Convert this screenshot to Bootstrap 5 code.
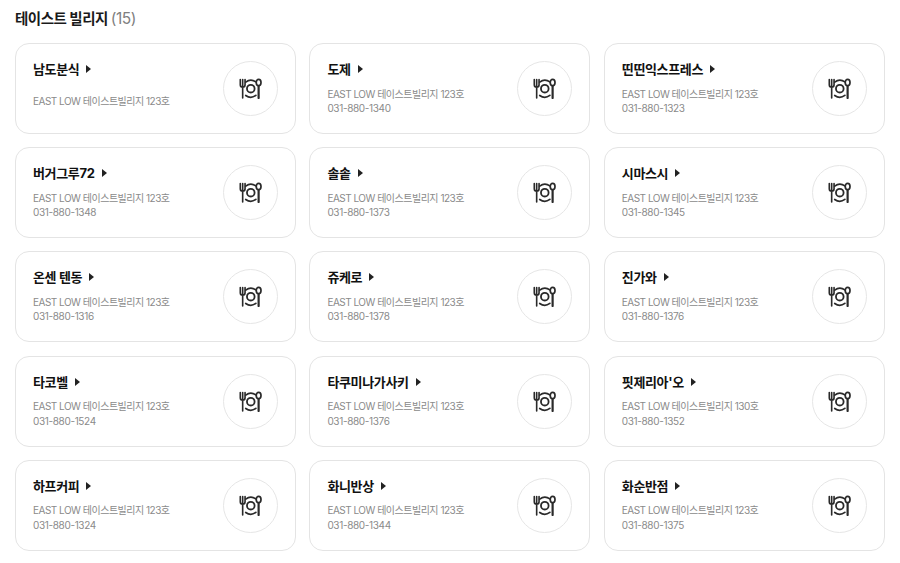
<!DOCTYPE html>
<html lang="ko"><head><meta charset="utf-8">
<link href="https://cdn.jsdelivr.net/npm/bootstrap@5.3.0/dist/css/bootstrap.min.css" rel="stylesheet">
<style>
body{font-family:Inter,"Noto Sans CJK KR",sans-serif;background:#fff;color:#111;overflow:hidden}
.page-wrap{padding:9px 15px 0}
.page-title{font-size:14.5px;font-weight:700;line-height:20px;letter-spacing:-.5px;margin:0 0 14px;color:#1a1a1a}
.page-title span{font-weight:400;color:#808080;font-size:15.5px}
.shop-grid{display:grid;grid-template-columns:repeat(3,281px);column-gap:13.4px;row-gap:13.2px}
.shop-card{height:91px;border:1px solid #e4e4e4;border-radius:14px;padding:16px 17px 0;display:flex;align-items:flex-start;justify-content:space-between;background:#fff}
.shop-name{font-size:13px;font-weight:700;line-height:18px;letter-spacing:-.35px;color:#111;display:flex;align-items:center;gap:7px}
.shop-name::after{content:"";border-left:5px solid #222;border-top:4px solid transparent;border-bottom:4px solid transparent}
.shop-lines{height:30px;margin-top:8px;display:flex;flex-direction:column;justify-content:center}
.shop-addr,.shop-tel{font-size:10px;line-height:14.5px;color:#8a8a8a}
.shop-addr{letter-spacing:-.5px}
.shop-tel{letter-spacing:-.35px}
.shop-icon{width:55px;height:55px;margin-top:1px;border:1px solid #e6e6e6;border-radius:50%;display:flex;align-items:center;justify-content:center;flex:none}
</style></head><body>
<svg width="0" height="0" class="d-block" aria-hidden="true"><symbol id="dish" viewBox="0 0 24 22">
<g fill="none" stroke="#2a2a2a" stroke-linecap="round">
<path stroke-width="1.700" d="M1.300 1.700v5.300c0 1.700 1.100 2.500 2.500 2.500s2.500-.8 2.500-2.500V1.700M3.800 1.700v19.300"/>
<ellipse stroke-width="1.800" cx="20.500" cy="4.800" rx="2.500" ry="3.400"/><path stroke-width="2.300" d="M20.500 8.200v12.800"/>
<path stroke-width="1.800" d="M7 4.300a9 9 0 0 1 10.600-.2M17.600 18.200a9 9 0 0 1-10.600.1"/>
<circle stroke-width="1.900" cx="12.300" cy="11.200" r="4"/>
</g></symbol></svg>
<main class="page-wrap">
<h1 class="page-title">테이스트 빌리지 <span>(15)</span></h1>
<div class="shop-grid">
<div class="shop-card"><div><div class="shop-name">남도분식</div><div class="shop-lines"><div class="shop-addr">EAST LOW 테이스트빌리지 123호</div></div></div><div class="shop-icon"><svg width="23" height="21"><use href="#dish"/></svg></div></div>
<div class="shop-card"><div><div class="shop-name">도제</div><div class="shop-lines"><div class="shop-addr">EAST LOW 테이스트빌리지 123호</div><div class="shop-tel">031-880-1340</div></div></div><div class="shop-icon"><svg width="23" height="21"><use href="#dish"/></svg></div></div>
<div class="shop-card"><div><div class="shop-name">띤띤익스프레스</div><div class="shop-lines"><div class="shop-addr">EAST LOW 테이스트빌리지 123호</div><div class="shop-tel">031-880-1323</div></div></div><div class="shop-icon"><svg width="23" height="21"><use href="#dish"/></svg></div></div>
<div class="shop-card"><div><div class="shop-name">버거그루72</div><div class="shop-lines"><div class="shop-addr">EAST LOW 테이스트빌리지 123호</div><div class="shop-tel">031-880-1348</div></div></div><div class="shop-icon"><svg width="23" height="21"><use href="#dish"/></svg></div></div>
<div class="shop-card"><div><div class="shop-name">솔솥</div><div class="shop-lines"><div class="shop-addr">EAST LOW 테이스트빌리지 123호</div><div class="shop-tel">031-880-1373</div></div></div><div class="shop-icon"><svg width="23" height="21"><use href="#dish"/></svg></div></div>
<div class="shop-card"><div><div class="shop-name">시마스시</div><div class="shop-lines"><div class="shop-addr">EAST LOW 테이스트빌리지 123호</div><div class="shop-tel">031-880-1345</div></div></div><div class="shop-icon"><svg width="23" height="21"><use href="#dish"/></svg></div></div>
<div class="shop-card"><div><div class="shop-name">온센 텐동</div><div class="shop-lines"><div class="shop-addr">EAST LOW 테이스트빌리지 123호</div><div class="shop-tel">031-880-1316</div></div></div><div class="shop-icon"><svg width="23" height="21"><use href="#dish"/></svg></div></div>
<div class="shop-card"><div><div class="shop-name">쥬케로</div><div class="shop-lines"><div class="shop-addr">EAST LOW 테이스트빌리지 123호</div><div class="shop-tel">031-880-1378</div></div></div><div class="shop-icon"><svg width="23" height="21"><use href="#dish"/></svg></div></div>
<div class="shop-card"><div><div class="shop-name">진가와</div><div class="shop-lines"><div class="shop-addr">EAST LOW 테이스트빌리지 123호</div><div class="shop-tel">031-880-1376</div></div></div><div class="shop-icon"><svg width="23" height="21"><use href="#dish"/></svg></div></div>
<div class="shop-card"><div><div class="shop-name">타코벨</div><div class="shop-lines"><div class="shop-addr">EAST LOW 테이스트빌리지 123호</div><div class="shop-tel">031-880-1524</div></div></div><div class="shop-icon"><svg width="23" height="21"><use href="#dish"/></svg></div></div>
<div class="shop-card"><div><div class="shop-name">타쿠미나가사키</div><div class="shop-lines"><div class="shop-addr">EAST LOW 테이스트빌리지 123호</div><div class="shop-tel">031-880-1376</div></div></div><div class="shop-icon"><svg width="23" height="21"><use href="#dish"/></svg></div></div>
<div class="shop-card"><div><div class="shop-name">핏제리아'오</div><div class="shop-lines"><div class="shop-addr">EAST LOW 테이스트빌리지 130호</div><div class="shop-tel">031-880-1352</div></div></div><div class="shop-icon"><svg width="23" height="21"><use href="#dish"/></svg></div></div>
<div class="shop-card"><div><div class="shop-name">하프커피</div><div class="shop-lines"><div class="shop-addr">EAST LOW 테이스트빌리지 123호</div><div class="shop-tel">031-880-1324</div></div></div><div class="shop-icon"><svg width="23" height="21"><use href="#dish"/></svg></div></div>
<div class="shop-card"><div><div class="shop-name">화니반상</div><div class="shop-lines"><div class="shop-addr">EAST LOW 테이스트빌리지 123호</div><div class="shop-tel">031-880-1344</div></div></div><div class="shop-icon"><svg width="23" height="21"><use href="#dish"/></svg></div></div>
<div class="shop-card"><div><div class="shop-name">화순반점</div><div class="shop-lines"><div class="shop-addr">EAST LOW 테이스트빌리지 123호</div><div class="shop-tel">031-880-1375</div></div></div><div class="shop-icon"><svg width="23" height="21"><use href="#dish"/></svg></div></div>
</div>
</main>
</body></html>
